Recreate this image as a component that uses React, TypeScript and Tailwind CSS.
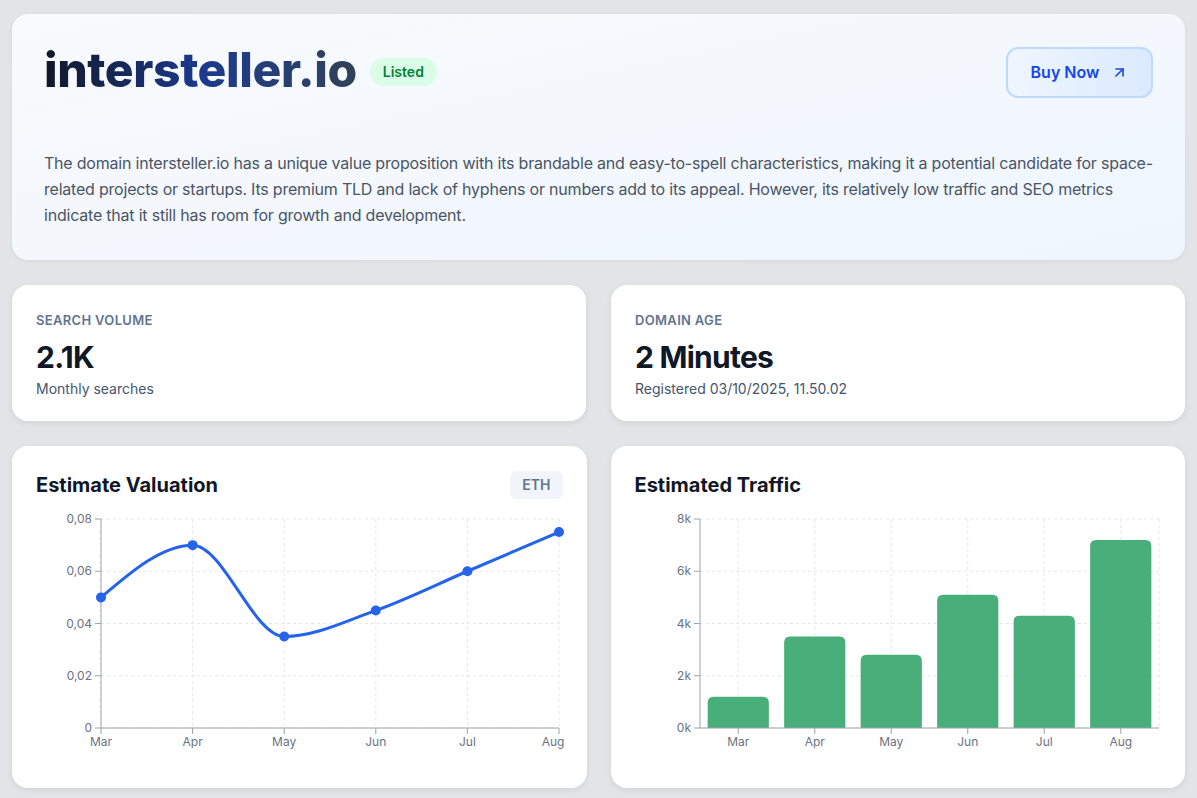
import { ArrowUpRight } from "lucide-react"

const valuation = [
  { m: "Mar", v: 0.05 },
  { m: "Apr", v: 0.07 },
  { m: "May", v: 0.035 },
  { m: "Jun", v: 0.045 },
  { m: "Jul", v: 0.06 },
  { m: "Aug", v: 0.075 },
]

const traffic = [
  { m: "Mar", v: 1200 },
  { m: "Apr", v: 3500 },
  { m: "May", v: 2800 },
  { m: "Jun", v: 5100 },
  { m: "Jul", v: 4300 },
  { m: "Aug", v: 7200 },
]

// plot box inside the svg
const L = 65
const R = 523
const T = 10
const B = 219
const W = 527
const H = 254

// monotone cubic, same idea as d3 curveMonotoneX
function monotonePath(pts: [number, number][]) {
  const n = pts.length
  const sign = (x: number) => (x < 0 ? -1 : 1)
  const t: number[] = new Array(n).fill(0)
  for (let i = 1; i < n - 1; i++) {
    const h0 = pts[i][0] - pts[i - 1][0]
    const h1 = pts[i + 1][0] - pts[i][0]
    const s0 = (pts[i][1] - pts[i - 1][1]) / h0
    const s1 = (pts[i + 1][1] - pts[i][1]) / h1
    const p = (s0 * h1 + s1 * h0) / (h0 + h1)
    t[i] = (sign(s0) + sign(s1)) * Math.min(Math.abs(s0), Math.abs(s1), 0.5 * Math.abs(p)) || 0
  }
  const hA = pts[1][0] - pts[0][0]
  t[0] = (3 * (pts[1][1] - pts[0][1]) / hA - t[1]) / 2
  const hZ = pts[n - 1][0] - pts[n - 2][0]
  t[n - 1] = (3 * (pts[n - 1][1] - pts[n - 2][1]) / hZ - t[n - 2]) / 2
  let d = `M${pts[0][0]},${pts[0][1]}`
  for (let i = 0; i < n - 1; i++) {
    const [x0, y0] = pts[i]
    const [x1, y1] = pts[i + 1]
    const dx = (x1 - x0) / 3
    d += ` C${x0 + dx},${y0 + dx * t[i]} ${x1 - dx},${y1 - dx * t[i + 1]} ${x1},${y1}`
  }
  return d
}

function ValuationChart() {
  const step = (R - L) / (valuation.length - 1)
  const y = (v: number) => B - (v / 0.08) * (B - T)
  const pts: [number, number][] = valuation.map((d, i) => [L + i * step, y(d.v)])
  const ticks = [0, 0.02, 0.04, 0.06, 0.08]
  return (
    <svg viewBox={`0 0 ${W} ${H}`} width={W} height={H} overflow="visible" className="mt-[10px] block overflow-visible">
      {ticks.map((tk) => (
        <line key={tk} x1={L} x2={R} y1={y(tk)} y2={y(tk)} stroke="#e5e7eb" strokeDasharray="3 3" />
      ))}
      {pts.map((p, i) => (
        <line key={i} x1={p[0]} x2={p[0]} y1={T} y2={B} stroke="#e5e7eb" strokeDasharray="3 3" />
      ))}
      <line x1={L} x2={L} y1={T} y2={B} stroke="#9ca3af" />
      <line x1={L} x2={R} y1={B} y2={B} stroke="#9ca3af" />
      {ticks.map((tk) => (
        <g key={tk}>
          <line x1={L - 6} x2={L} y1={y(tk)} y2={y(tk)} stroke="#9ca3af" />
          <text x={L - 9} y={y(tk) + 4} textAnchor="end" fontSize="12" fill="#6b7280">
            {tk === 0 ? "0" : tk.toFixed(2).replace(".", ",")}
          </text>
        </g>
      ))}
      {pts.map((p, i) => (
        <g key={i}>
          <line x1={p[0]} x2={p[0]} y1={B} y2={B + 6} stroke="#9ca3af" />
          <text x={i === pts.length - 1 ? p[0] - 6 : p[0]} y={B + 18} textAnchor="middle" fontSize="12" fill="#6b7280">
            {valuation[i].m}
          </text>
        </g>
      ))}
      <path d={monotonePath(pts)} fill="none" stroke="#2563eb" strokeWidth="3" />
      {pts.map((p, i) => (
        <circle key={i} cx={p[0]} cy={p[1]} r="5" fill="#2563eb" />
      ))}
    </svg>
  )
}

function TrafficChart() {
  const band = (R + 1 - L) / traffic.length
  const y = (v: number) => B - (v / 8000) * (B - T)
  const ticks = [0, 2000, 4000, 6000, 8000]
  const bw = band * 0.8
  const r = 6
  return (
    <svg viewBox={`0 0 ${W} ${H}`} width={W} height={H} overflow="visible" className="mt-[10px] block overflow-visible">
      {ticks.map((tk) => (
        <line key={tk} x1={L} x2={R + 1} y1={y(tk)} y2={y(tk)} stroke="#e5e7eb" strokeDasharray="3 3" />
      ))}
      {traffic.map((_, i) => (
        <line key={i} x1={L + band * (i + 0.5)} x2={L + band * (i + 0.5)} y1={T} y2={B} stroke="#e5e7eb" strokeDasharray="3 3" />
      ))}
      <line x1={R + 1} x2={R + 1} y1={T} y2={B} stroke="#e5e7eb" strokeDasharray="3 3" />
      {traffic.map((d, i) => {
        const x0 = L + band * i + (band - bw) / 2
        const x1 = x0 + bw
        const top = y(d.v)
        const path = `M${x0},${B} L${x0},${top + r} Q${x0},${top} ${x0 + r},${top} L${x1 - r},${top} Q${x1},${top} ${x1},${top + r} L${x1},${B} Z`
        return <path key={d.m} d={path} fill="#48ae7a" />
      })}
      <line x1={L} x2={L} y1={T} y2={B} stroke="#9ca3af" />
      <line x1={L} x2={R + 1} y1={B} y2={B} stroke="#9ca3af" />
      {ticks.map((tk) => (
        <g key={tk}>
          <line x1={L - 6} x2={L} y1={y(tk)} y2={y(tk)} stroke="#9ca3af" />
          <text x={L - 9} y={y(tk) + 4} textAnchor="end" fontSize="12" fill="#6b7280">
            {tk / 1000}k
          </text>
        </g>
      ))}
      {traffic.map((d, i) => {
        const cx = L + band * (i + 0.5)
        return (
          <g key={d.m}>
            <line x1={cx} x2={cx} y1={B} y2={B + 6} stroke="#9ca3af" />
            <text x={cx} y={B + 18} textAnchor="middle" fontSize="12" fill="#6b7280">
              {d.m}
            </text>
          </g>
        )
      })}
    </svg>
  )
}

function StatCard({ label, value, sub }: { label: string; value: string; sub: string }) {
  return (
    <div className="rounded-2xl bg-white px-6 pt-[25px] pb-[22px] shadow-[0_2px_6px_rgba(0,0,0,0.08)]">
      <div className="text-[13px] leading-5 font-semibold uppercase tracking-wide text-slate-500">{label}</div>
      <div className="mt-[9px] text-3xl leading-[36px] font-bold tracking-tight text-gray-900">{value}</div>
      <div className="mt-[4px] text-sm leading-5 text-slate-600">{sub}</div>
    </div>
  )
}

export default function App() {
  return (
    <div className="min-h-screen bg-[#e3e4e8] px-3 pt-[14px] pb-3 font-['Inter',sans-serif]">
      <div className="flex flex-col gap-[25px]">
        <div className="rounded-2xl bg-gradient-to-br from-slate-50 to-blue-50 p-8 shadow-[0_1px_4px_rgba(0,0,0,0.06)]">
          <div className="flex items-center justify-between">
            <div className="flex items-center gap-[13px]">
              <h1 className="bg-gradient-to-r from-gray-900 via-blue-900 to-slate-700 bg-clip-text pb-1 text-5xl leading-[48px] font-extrabold tracking-[-0.008em] text-transparent">
                intersteller.io
              </h1>
              <span className="rounded-full bg-green-100 px-[13px] py-1 text-sm font-semibold text-green-700">Listed</span>
            </div>
            <button className="flex h-[51px] w-[147px] items-center justify-center gap-3 rounded-xl border-2 border-blue-200 bg-gradient-to-r from-blue-50 to-blue-100 text-base font-semibold text-blue-700">
              Buy Now
              <ArrowUpRight size={17} strokeWidth={2.25} />
            </button>
          </div>
          <p className="mt-[52px] text-base leading-[26px] tracking-[-0.013em] text-gray-600">
            The domain intersteller.io has a unique value proposition with its brandable and easy-to-spell characteristics, making it a potential candidate for space-related projects or startups. Its premium TLD and lack of hyphens or numbers add to its appeal. However, its relatively low traffic and SEO metrics indicate that it still has room for growth and development.
          </p>
        </div>

        <div className="grid grid-cols-2 gap-[25px]">
          <StatCard label="Search Volume" value="2.1K" sub="Monthly searches" />
          <StatCard label="Domain Age" value="2 Minutes" sub="Registered 03/10/2025, 11.50.02" />
        </div>

        <div className="grid grid-cols-2 gap-[24px]">
          <div className="rounded-2xl bg-white px-6 pt-[25px] pb-[25px] shadow-[0_2px_6px_rgba(0,0,0,0.08)]">
            <div className="flex items-center justify-between">
              <h2 className="text-xl leading-7 font-bold text-gray-900">Estimate Valuation</h2>
              <span className="rounded-md bg-slate-100 px-3 py-1 text-sm font-semibold text-slate-500">ETH</span>
            </div>
            <ValuationChart />
          </div>
          <div className="rounded-2xl bg-white px-6 pt-[25px] pb-[25px] shadow-[0_2px_6px_rgba(0,0,0,0.08)]">
            <h2 className="text-xl leading-7 font-bold text-gray-900">Estimated Traffic</h2>
            <TrafficChart />
          </div>
        </div>
      </div>
    </div>
  )
}
